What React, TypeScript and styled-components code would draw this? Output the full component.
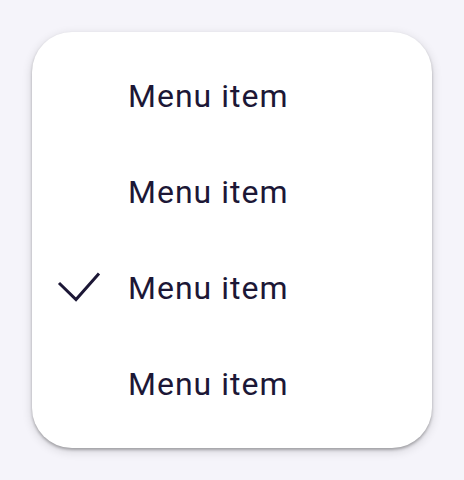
import React from 'react'
import styled, { createGlobalStyle } from 'styled-components'

const GlobalStyle = createGlobalStyle`
  html, body {
    margin: 0;
    padding: 0;
    background: #f5f4fa;
  }
  body {
    font-family: Roboto, "Noto Sans", sans-serif;
  }
`

const Page = styled.div`
  width: 464px;
  height: 480px;
  padding: 32px;
  box-sizing: border-box;
`

const Menu = styled.ul`
  margin: 0;
  padding: 16px 0;
  list-style: none;
  width: 400px;
  background: #ffffff;
  border-radius: 40px;
  box-shadow: 0 2px 3px rgba(0, 0, 0, 0.28), 0 3px 8px 2px rgba(0, 0, 0, 0.1);
`

const Item = styled.li`
  display: flex;
  align-items: center;
  height: 96px;
  padding-left: 24px;
  color: #1c1736;
`

const IconSlot = styled.span`
  display: flex;
  align-items: center;
  justify-content: center;
  width: 48px;
  height: 48px;
  margin-right: 24px;
`

const Label = styled.span`
  font-size: 32px;
  letter-spacing: 1px;
  line-height: 48px;
`

const items = [
  { title: 'Menu item', checked: false },
  { title: 'Menu item', checked: false },
  { title: 'Menu item', checked: true },
  { title: 'Menu item', checked: false },
]

const Check = () => (
  <svg width="48" height="48" viewBox="0 0 48 48" fill="none">
    <path d="M3 19 L20 35.5 L43 9.5" stroke="#1c1736" strokeWidth="3" />
  </svg>
)

const App: React.FC = () => {
  return (
    <Page>
      <GlobalStyle />
      <Menu>
        {items.map((item, index) => (
          <Item key={index}>
            <IconSlot>{item.checked && <Check />}</IconSlot>
            <Label>{item.title}</Label>
          </Item>
        ))}
      </Menu>
    </Page>
  )
}

export default App
